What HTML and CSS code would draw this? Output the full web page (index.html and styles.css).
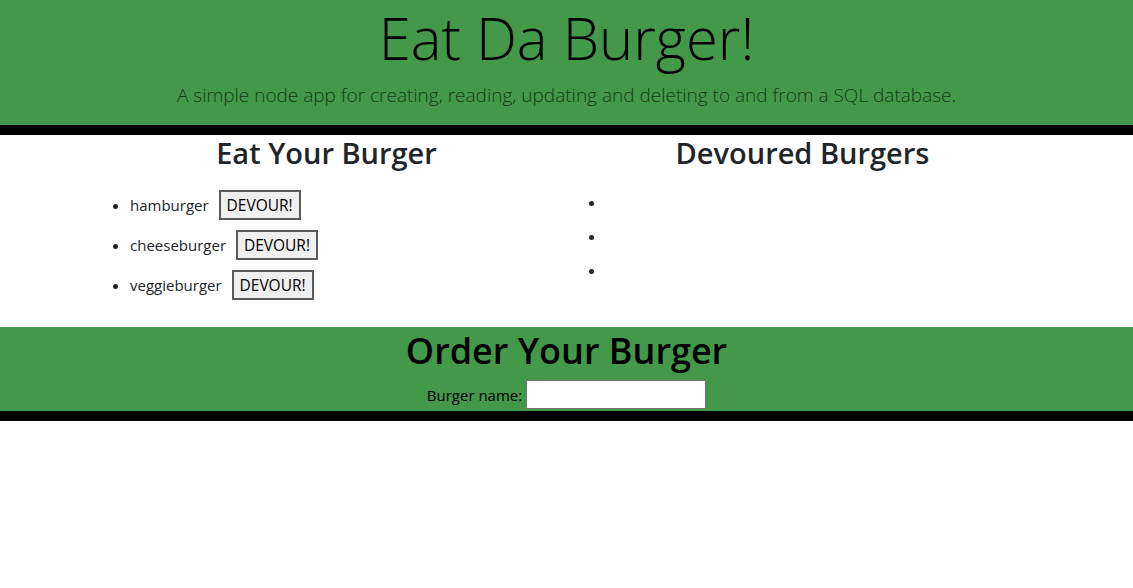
FILE: index.html
```html
<!DOCTYPE html>
<html>
<head>
<meta charset="utf-8">
<link rel="stylesheet" href="styles.css">
</head>
<body>
<header class="jumbo">
  <h1 class="title">Eat Da Burger!</h1>
  <p class="lead">A simple node app for creating, reading, updating and deleting to and from a SQL database.</p>
</header>
<main class="columns">
  <section class="col">
    <h2 class="col-title">Eat Your Burger</h2>
    <ul class="burgers">
      <li class="has-btn">hamburger <button class="devour">DEVOUR!</button></li>
      <li class="has-btn">cheeseburger <button class="devour">DEVOUR!</button></li>
      <li class="has-btn">veggieburger <button class="devour">DEVOUR!</button></li>
    </ul>
  </section>
  <section class="col">
    <h2 class="col-title">Devoured Burgers</h2>
    <ul class="burgers">
      <li></li>
      <li></li>
      <li></li>
    </ul>
  </section>
</main>
<section class="order">
  <h1 class="order-title">Order Your Burger</h1>
  <form class="order-form">
    <label class="order-label" for="bn">Burger name:</label>
    <input class="order-input" id="bn" type="text">
  </form>
</section>
</body>
</html>
```
FILE: styles.css
```css
html, body {
  margin: 0;
  padding: 0;
  background: #fff;
}
body {
  font-family: "Open Sans", "Noto Sans", sans-serif;
  font-size: 16px;
  color: #212529;
}
.jumbo {
  background: #43984a;
  border-bottom: 10px solid #000;
  height: 125px;
  text-align: center;
  display: flex;
  flex-direction: column;
  align-items: center;
}
.title {
  margin: 3px 0 0;
  font-weight: 300;
  font-size: 58px;
  line-height: 70px;
  color: #000;
  white-space: nowrap;
}
.lead {
  margin: 9px 0 0;
  font-weight: 300;
  font-size: 19px;
  line-height: 26px;
  color: #163a19;
}
.columns {
  width: 952px;
  padding-right: 4px;
  margin: 0 auto;
  display: grid;
  grid-template-columns: 1fr 1fr;
  height: 191px;
}
.col-title {
  margin: 0 0 19px;
  text-align: center;
  font-size: 29px;
  font-weight: 600;
  line-height: 36px;
  color: #212529;
}
.burgers {
  margin: 0;
  padding-left: 41.5px;
  font-size: 15px;
}
.burgers li {
  line-height: 24px;
  margin-bottom: 10px;
  min-height: 24px;
}
.burgers li.has-btn {
  line-height: 30px;
}
.devour {
  box-sizing: border-box;
  font-family: inherit;
  font-size: 15.5px;
  line-height: 20px;
  margin: 0 0 0 6px;
  padding: 0 6px;
  height: 30px;
  background: #efefef;
  border: 2px solid #5a5a5a;
  color: #000;
  vertical-align: baseline;
}
.order {
  background: #43984a;
  border-bottom: 10px solid #000;
  height: 84px;
  text-align: center;
}
.order-title {
  margin: 1px 0 0;
  font-size: 36px;
  font-weight: 600;
  line-height: 48px;
  color: #000;
}
.order-form {
  margin-top: 5px;
  display: flex;
  justify-content: center;
  align-items: center;
  gap: 4px;
}
.order-label {
  font-size: 15px;
  color: #000;
  line-height: 22px;
}
.order-input {
  box-sizing: border-box;
  width: 180px;
  height: 29px;
  border: 1px solid #777;
  padding: 1px 2px;
  margin: 0;
  background: #fff;
}
```
